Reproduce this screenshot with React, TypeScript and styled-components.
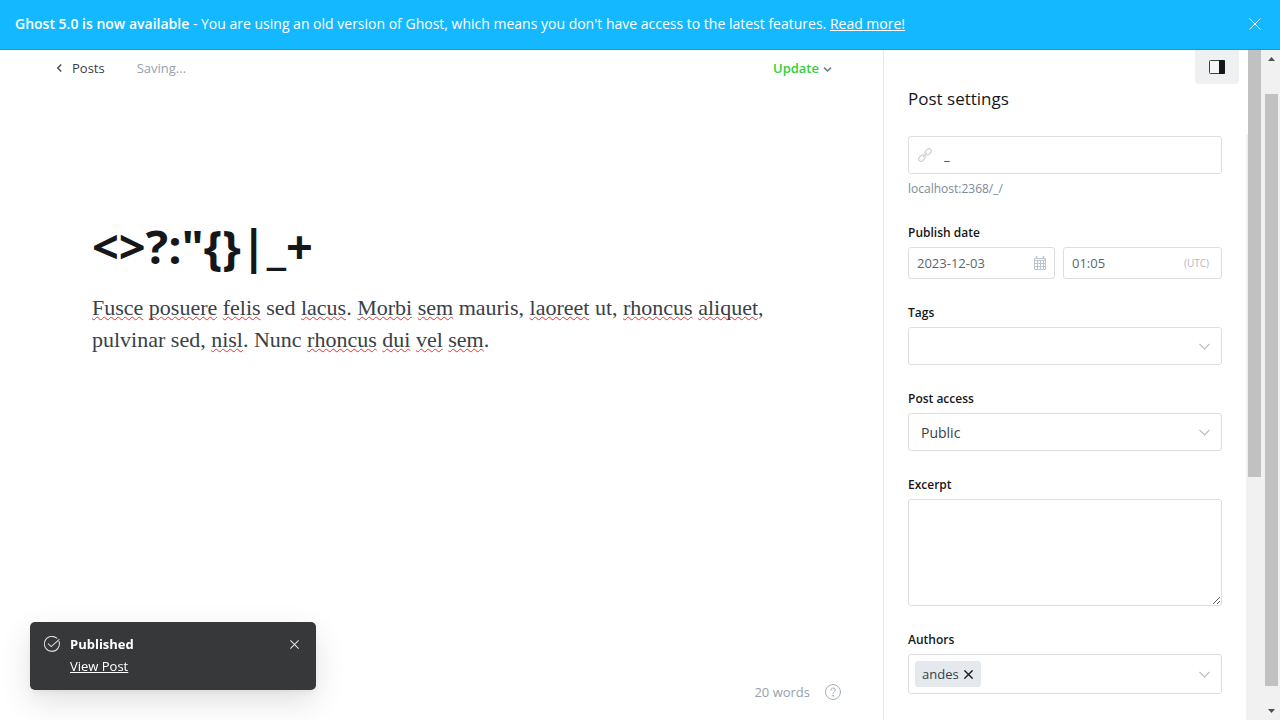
import React from "react";
import styled, { createGlobalStyle } from "styled-components";

const sans = `"Segoe UI", "Open Sans", "Noto Sans", sans-serif`;
const serif = `Georgia, "Liberation Serif", serif`;

const GlobalStyle = createGlobalStyle`
  *, *::before, *::after { box-sizing: border-box; }
  body { margin: 0; background: #fff; color: #15171a; font-family: ${sans}; font-size: 13px; line-height: 20px; }
  button, input, select, textarea { font: inherit; color: inherit; }
  button { border: 0; padding: 0; background: none; cursor: pointer; }
  h1, h2, p { margin: 0; }
  svg { display: block; flex: none; }
`;

const Shell = styled.div`
  display: flex;
  flex-direction: column;
  height: 100vh;
  overflow: hidden;
`;

const Banner = styled.header`
  display: flex;
  align-items: center;
  justify-content: space-between;
  flex: none;
  height: 50px;
  padding: 0 19px 2px 15px;
  color: #fff;
  background: #14b8ff;
  border-bottom: 1px solid #0a9fe2;
  font-size: 14px;
  strong { font-weight: 600; }
  a { color: inherit; }
`;

const Body = styled.div`
  display: flex;
  flex: 1;
  min-height: 0;
`;

const Editor = styled.main`
  display: flex;
  flex-direction: column;
  flex: 1;
  min-width: 0;
`;

const Toolbar = styled.nav`
  display: flex;
  align-items: center;
  height: 36px;
  padding: 0 51px 0 55px;
`;

const BackLink = styled.a`
  display: flex;
  align-items: center;
  gap: 8px;
  color: #394047;
  font-weight: 500;
  text-decoration: none;
`;

const Status = styled.span`
  margin-left: 32px;
  color: #95a1ad;
`;

const UpdateButton = styled.button`
  display: flex;
  align-items: center;
  gap: 4px;
  margin-left: auto;
  color: #30cf43;
  font-weight: 600;
`;

const Canvas = styled.article`
  flex: 1;
  padding: 128px 92px 0;
`;

const Title = styled.h1`
  font-size: 47px;
  line-height: 64px;
  font-weight: 700;
`;

const Paragraph = styled.p`
  margin-top: 14px;
  color: #394047;
  font-family: ${serif};
  font-size: 22px;
  line-height: 32px;
`;

const Misspelt = styled.span`
  text-decoration: underline wavy #ff2a2a 1px;
  text-decoration-skip-ink: none;
`;

const EditorFooter = styled.footer`
  display: flex;
  align-items: center;
  justify-content: flex-end;
  gap: 15px;
  height: 56px;
  padding: 0 42px 0 0;
  color: #95a1ad;
`;

const Settings = styled.aside`
  display: flex;
  flex-direction: column;
  flex: none;
  width: 363px;
  border-left: 1px solid #e5e7e9;
`;

const SettingsHeader = styled.div`
  position: relative;
  display: flex;
  justify-content: space-between;
  flex: none;
  height: 84px;
  margin-right: -2px;
  padding: 0 9px 0 24px;
  background: #fff;
`;

const SettingsTitle = styled.h2`
  padding-top: 36px;
  font-size: 17px;
  line-height: 26px;
  font-weight: 500;
`;

const ToggleButton = styled.button`
  display: flex;
  align-items: center;
  justify-content: center;
  width: 44px;
  height: 34px;
  border-radius: 0 0 4px 4px;
  background: #eff0f2;
`;

const Form = styled.form`
  display: flex;
  flex-direction: column;
  gap: 24px;
  min-height: 0;
  overflow: hidden;
  padding: 2px 24px 24px;
`;

const Field = styled.div`
  flex: none;
`;

const Label = styled.label`
  display: block;
  margin-bottom: 4px;
  font-size: 12px;
  font-weight: 600;
  color: #15171a;
`;

const Hint = styled.p`
  margin-top: 5px;
  font-size: 12px;
  color: #7c8b9a;
`;

const Box = styled.div<{ $height: number; $padding?: string; $gap?: number }>`
  display: flex;
  align-items: center;
  gap: ${(p) => p.$gap ?? 0}px;
  height: ${(p) => p.$height}px;
  padding: ${(p) => p.$padding ?? "0"};
  border: 1px solid #dddee0;
  border-radius: 3px;
  background: #fff;
`;

const BareInput = styled.input`
  flex: 1;
  min-width: 0;
  width: 100%;
  padding: 0;
  border: 0;
  outline: 0;
  background: none;
  color: #394047;
`;

const DateInput = styled(BareInput)`
  color: #5b6670;
`;

const DateRow = styled.div`
  display: grid;
  grid-template-columns: 147fr 159fr;
  gap: 8px;
`;

const Zone = styled.span`
  font-size: 10px;
  color: #aeb7c1;
`;

const SelectWrap = styled.div`
  display: grid;
  align-items: center;
  > * { grid-area: 1 / 1; }
  svg { justify-self: end; margin-right: 12px; pointer-events: none; }
`;

const Select = styled.select`
  appearance: none;
  width: 100%;
  height: 38px;
  padding: 1px 12px 0;
  border: 1px solid #dddee0;
  border-radius: 3px;
  background: #fff;
  color: #394047;
  font-size: 14px;
`;

const TextArea = styled.textarea`
  display: block;
  width: 100%;
  height: 107px;
  padding: 8px 12px;
  border: 1px solid #dddee0;
  border-radius: 3px;
  resize: vertical;
`;

const Chip = styled.span`
  display: flex;
  align-items: center;
  gap: 5px;
  height: 26px;
  padding: 0 8px 0 7px;
  border-radius: 3px;
  background: #e5e9ed;
  color: #394047;
  font-weight: 500;
`;

const PanelTrack = styled.div`
  flex: none;
  width: 17px;
  padding: 0 2px;
  background: #f1f1f1;
`;

const PanelThumb = styled.div`
  height: calc(64% - 2px);
  background: #c1c1c1;
`;

const PageTrack = styled.div`
  display: flex;
  flex-direction: column;
  align-items: center;
  flex: none;
  width: 17px;
  padding: 7px 2px;
  background: #f1f1f1;
`;

const PageThumb = styled.div`
  flex: 1;
  align-self: stretch;
  margin: 33px 0 23px;
  background: #c1c1c1;
`;

const Toast = styled.section`
  position: fixed;
  left: 30px;
  bottom: 30px;
  display: flex;
  align-items: flex-start;
  width: 286px;
  height: 68px;
  padding: 12px 17px 12px 14px;
  border-radius: 5px;
  color: #fff;
  background: #37383a;
  box-shadow: 0 3px 6px rgba(0, 0, 0, 0.05), 0 12px 32px rgba(0, 0, 0, 0.12);
  > svg { margin-top: 2px; }
`;

const ToastText = styled.div`
  display: flex;
  flex-direction: column;
  align-items: flex-start;
  flex: 1;
  gap: 2px;
  margin-left: 10px;
  a { color: #fff; font-weight: 500; }
`;

const ToastClose = styled.button`
  padding: 6px 0;
`;

const Cross = ({ size, color, width }: { size: number; color: string; width: number }) => (
  <svg width={size} height={size} viewBox="0 0 12 12" fill="none" stroke={color} strokeWidth={width} aria-hidden="true">
    <path d="M.5.5l11 11M11.5.5l-11 11" />
  </svg>
);

const Chevron = () => (
  <svg width="11" height="7" viewBox="0 0 11 7" fill="none" stroke="#b3bbc5" strokeWidth="1.2" aria-hidden="true">
    <path d="M.5.8l5 5 5-5" />
  </svg>
);

const LinkIcon = () => (
  <svg width="14" height="14" viewBox="0 0 24 24" fill="none" stroke="#cdcfd1" strokeWidth="2" strokeLinecap="round" aria-hidden="true">
    <g transform="rotate(-45 12 12)">
      <rect x="-1.500" y="8" width="12" height="8" rx="4" />
      <rect x="13.500" y="8" width="12" height="8" rx="4" />
      <path d="M7.500 12h9" />
    </g>
  </svg>
);

const CalendarIcon = () => (
  <svg width="12" height="14" viewBox="0 0 12 14" fill="none" stroke="#bcc4cc" aria-hidden="true">
    <path d="M.5 2.500h11v11H.5zM.5 4.500h11M3.500 5v8.500M6.500 5v8.500M9.500 5v8.500M.5 7.500h11M.5 10.500h11" />
    <path d="M2.500 0v3M9.500 0v3" strokeWidth="1.500" />
  </svg>
);

const PanelIcon = () => (
  <svg width="16" height="14" viewBox="0 0 16 14" aria-hidden="true">
    <rect x=".5" y=".5" width="15" height="13" rx="1" fill="#f4f5f6" stroke="#394047" />
    <path d="M10 0h5a1 1 0 0 1 1 1v12a1 1 0 0 1-1 1h-5z" fill="#15171a" />
  </svg>
);

const CheckIcon = () => (
  <svg width="16" height="16" viewBox="0 0 16 16" fill="none" stroke="#d8d9da" strokeWidth="1.100" strokeLinecap="round" aria-hidden="true">
    <path d="M15 5.500A7.500 7.500 0 1 1 12.800 2.200" />
    <path d="M4.300 7.800L7.200 10.600 15 3.600" />
  </svg>
);

const HelpIcon = () => (
  <svg width="16" height="16" viewBox="0 0 16 16" fill="none" stroke="#a3afba" strokeLinecap="round" aria-hidden="true">
    <circle cx="8" cy="8" r="7.500" />
    <path d="M5.800 6.300a2.200 2.200 0 1 1 3.200 1.900c-.7.400-1 .7-1 1.500" />
    <circle cx="8" cy="11.800" r=".4" fill="#a3afba" />
  </svg>
);

const Triangle = ({ down }: { down?: boolean }) => (
  <svg width="7" height="4" viewBox="0 0 7 4" aria-hidden="true">
    <path d={down ? "M0 0h7L3.500 4z" : "M0 4h7L3.500 0z"} fill="#505050" />
  </svg>
);

const words: [string, boolean][] = [
  ["Fusce", true], [" ", false], ["posuere", true], [" ", false], ["felis", true], [" sed ", false],
  ["lacus", true], [". ", false], ["Morbi", true], [" ", false], ["sem", true], [" mauris, ", false],
  ["laoreet", true], [" ut, ", false], ["rhoncus", true], [" ", false], ["aliquet", true], [", ", false],
  ["pulvinar sed, ", false], ["nisl", true], [". Nunc ", false], ["rhoncus", true], [" ", false],
  ["dui", true], [" ", false], ["vel", true], [" ", false], ["sem", true], [".", false],
];

export default function App() {
  return (
    <Shell>
      <GlobalStyle />
      <Banner>
        <p>
          <strong>Ghost 5.0 is now available</strong> - You are using an old version of Ghost, which means you don't
          have access to the latest features. <a href="#upgrade">Read more!</a>
        </p>
        <button type="button" aria-label="Dismiss">
          <Cross size={12} color="#fff" width={1} />
        </button>
      </Banner>
      <Body>
        <Editor>
          <Toolbar>
            <BackLink href="#posts">
              <svg width="9" height="8" viewBox="0 0 9 8" fill="none" stroke="#394047" strokeWidth="1.300" aria-hidden="true">
                <path d="M6.200.5L2.700 4l3.500 3.500" />
              </svg>
              Posts
            </BackLink>
            <Status>Saving...</Status>
            <UpdateButton type="button">
              Update
              <svg width="9" height="8" viewBox="0 0 9 8" fill="none" stroke="#76808a" strokeWidth="1.600" aria-hidden="true">
                <path d="M1 3.600l3.500 3.200L8 3.600" />
              </svg>
            </UpdateButton>
          </Toolbar>
          <Canvas>
            <Title>{'<>?:"{}|_+'}</Title>
            <Paragraph>
              {words.map(([text, wrong], i) => (wrong ? <Misspelt key={i}>{text}</Misspelt> : text))}
            </Paragraph>
          </Canvas>
          <EditorFooter>
            <span>20 words</span>
            <button type="button" aria-label="Help">
              <HelpIcon />
            </button>
          </EditorFooter>
        </Editor>
        <Settings>
          <SettingsHeader>
            <SettingsTitle>Post settings</SettingsTitle>
            <ToggleButton type="button" aria-label="Toggle settings">
              <PanelIcon />
            </ToggleButton>
          </SettingsHeader>
          <Form>
            <Field>
              <Box $height={38} $padding="0 9px" $gap={12}>
                <LinkIcon />
                <BareInput aria-label="Post URL" defaultValue="_" />
              </Box>
              <Hint>localhost:2368/_/</Hint>
            </Field>
            <Field>
              <Label htmlFor="date">Publish date</Label>
              <DateRow>
                <Box $height={32} $padding="0 8px">
                  <DateInput id="date" defaultValue="2023-12-03" />
                  <CalendarIcon />
                </Box>
                <Box $height={32} $padding="0 12px 0 8px">
                  <DateInput aria-label="Publish time" defaultValue="01:05" />
                  <Zone>(UTC)</Zone>
                </Box>
              </DateRow>
            </Field>
            <Field>
              <Label htmlFor="tags">Tags</Label>
              <SelectWrap>
                <Select id="tags">
                  <option value="" />
                </Select>
                <Chevron />
              </SelectWrap>
            </Field>
            <Field>
              <Label htmlFor="access">Post access</Label>
              <SelectWrap>
                <Select id="access">
                  <option>Public</option>
                </Select>
                <Chevron />
              </SelectWrap>
            </Field>
            <Field>
              <Label htmlFor="excerpt">Excerpt</Label>
              <TextArea id="excerpt" />
            </Field>
            <Field>
              <Label htmlFor="authors">Authors</Label>
              <Box $height={40} $padding="0 11px 0 6px">
                <Chip>
                  andes
                  <button type="button" aria-label="Remove andes">
                    <Cross size={9} color="#15171a" width={1.8} />
                  </button>
                </Chip>
                <BareInput id="authors" />
                <Chevron />
              </Box>
            </Field>
          </Form>
        </Settings>
        <PanelTrack>
          <PanelThumb />
        </PanelTrack>
        <PageTrack>
          <Triangle />
          <PageThumb />
          <Triangle down />
        </PageTrack>
      </Body>
      <Toast>
        <CheckIcon />
        <ToastText>
          <strong>Published</strong>
          <a href="#view">View Post</a>
        </ToastText>
        <ToastClose type="button" aria-label="Close">
          <Cross size={9} color="#e4e4e5" width={1.4} />
        </ToastClose>
      </Toast>
    </Shell>
  );
}
